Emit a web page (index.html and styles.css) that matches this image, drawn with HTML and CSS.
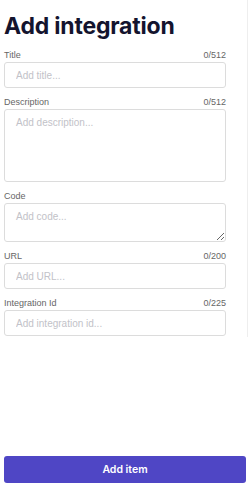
FILE: index.html
```html
<!DOCTYPE html>
<html>
<head>
  <title>Add integration</title>
  <meta name="viewport" content="width=device-width, initial-scale=1.0">
  <link rel="stylesheet" href="styles.css">
</head>
<body>
  <div class="page">
    <div class="scroll">
      <h1>Add integration</h1>

      <div class="field">
        <div class="label-row"><label for="title">Title</label><span class="count">0/512</span></div>
        <input id="title" class="input" placeholder="Add title...">
      </div>

      <div class="field">
        <div class="label-row"><label for="desc">Description</label><span class="count">0/512</span></div>
        <textarea id="desc" class="input desc" placeholder="Add description..."></textarea>
      </div>

      <div class="field">
        <div class="label-row"><label for="code">Code</label></div>
        <textarea id="code" class="input code" placeholder="Add code..."></textarea>
      </div>

      <div class="field">
        <div class="label-row"><label for="url">URL</label><span class="count">0/200</span></div>
        <input id="url" class="input" placeholder="Add URL...">
      </div>

      <div class="field">
        <div class="label-row"><label for="intid">Integration Id</label><span class="count">0/225</span></div>
        <input id="intid" class="input" placeholder="Add integration id...">
      </div>
    </div>

    <button class="add-btn">Add item</button>
  </div>
</body>
</html>
```

FILE: styles.css
```css
/* form panel */
body {
  margin: 0;
  font-family: Inter, "Noto Sans", sans-serif;
  background: #fff;
}

.page {
  height: 488px;
  display: flex;
  flex-direction: column;
  box-sizing: border-box;
  padding-bottom: 5px;
}

.scroll {
  width: 248px;
  box-sizing: border-box;
  padding-left: 4px;
  padding-bottom: 1px;
  border-right: 1px solid #eeeeee;
}

h1 {
  margin: 12px 0 10px;
  font-size: 23px;
  line-height: 28px;
  font-weight: 700;
  color: #14142e;
  letter-spacing: -0.2px;
}

.field {
  width: 222px;
  margin-bottom: 9px;
}

.field:last-child {
  margin-bottom: 0;
}

.label-row {
  display: flex;
  justify-content: space-between;
  align-items: center;
  height: 10px;
  margin-bottom: 2px;
  font-family: "Liberation Sans", Arial, sans-serif;
  font-size: 9px;
  color: #666;
}

.input {
  display: block;
  width: 222px;
  height: 26px;
  box-sizing: border-box;
  margin: 0;
  padding: 0 11px;
  border: 1px solid #dcdcdc;
  border-radius: 3px;
  font-family: "Liberation Sans", Arial, sans-serif;
  font-size: 10px;
  color: #333;
  outline: none;
}

.input::placeholder {
  color: #c2c2c8;
}

textarea.input {
  padding: 7px 11px;
  resize: vertical;
}

textarea.desc {
  height: 73px;
  resize: none;
}

.code {
  height: 39px;
}

.add-btn {
  margin: auto 0 0 4px;
  width: 242px;
  height: 27px;
  border: none;
  border-radius: 3px;
  background: #4f46c5;
  color: #fff;
  font-family: Inter, "Noto Sans", sans-serif;
  font-size: 10.5px;
  font-weight: 600;
}
```
